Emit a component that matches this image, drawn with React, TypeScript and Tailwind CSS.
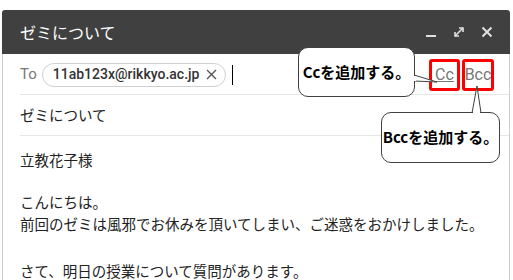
import React from "react";

const jp = { fontFamily: '"Noto Sans CJK JP", "Noto Sans", sans-serif' };
const roboto = { fontFamily: "Roboto, sans-serif" };

function Callout({ children, className }: { children: React.ReactNode; className: string }) {
  return (
    <div
      className={`absolute flex items-center justify-center rounded-[10px] border border-[#404040] bg-white text-[15px] font-bold text-black ${className}`}
      style={jp}
    >
      {children}
    </div>
  );
}

export default function App() {
  return (
    <div className="relative h-[280px] w-[513px] overflow-hidden bg-white" style={jp}>
      <div className="ml-[2px] mt-[10px] w-[508px]">
        {/* header */}
        <div className="flex h-[44px] items-center rounded-t-[3px] bg-[#404040] pl-[18px] pr-[16px]">
          <span className="flex-1 text-[16px] text-white">ゼミについて</span>
          <div className="flex items-center gap-[14px] text-[#e0e0e0]">
            <svg width="14" height="14" viewBox="0 0 14 14">
              <rect x="2" y="10" width="10" height="2" fill="currentColor" />
            </svg>
            <svg width="14" height="14" viewBox="0 0 14 14" fill="none" stroke="currentColor" strokeWidth="1.6">
              <path d="M3 11 L11 3" />
              <path d="M7 3 H11 V7" />
              <path d="M3 7 V11 H7" />
            </svg>
            <svg width="14" height="14" viewBox="0 0 14 14" fill="none" stroke="currentColor" strokeWidth="2">
              <path d="M2.5 2.5 L11.5 11.5 M11.5 2.5 L2.5 11.5" />
            </svg>
          </div>
        </div>

        {/* body */}
        <div className="h-[226px] border-x border-[#cfcfcf] pl-[17px]">
          <div className="flex h-[41px] items-center border-b border-[#e6e6e6] pr-[15px] pt-[1px]">
            <span className="text-[15px] text-[#777]" style={roboto}>
              To
            </span>
            <span
              className="ml-[5px] flex h-[24px] items-center rounded-full border border-[#d0d0d0] pl-[10px] pr-[8px] text-[14px] font-medium text-[#333]"
              style={roboto}
            >
              11ab123x@rikkyo.ac.jp
              <svg className="ml-[7px]" width="11" height="11" viewBox="0 0 11 11" stroke="#555" strokeWidth="1.4">
                <path d="M1 1 L10 10 M10 1 L1 10" />
              </svg>
            </span>
            <span className="ml-[6px] h-[20px] w-[1px] bg-black" />
            <div className="ml-auto flex gap-[2px] text-[16px] text-[#777]" style={roboto}>
              <span className="flex h-[32px] w-[31px] items-center justify-center rounded-[3px] border-[3px] border-[#ff0000] underline">
                Cc
              </span>
              <span className="flex h-[32px] w-[32px] items-center justify-center rounded-[3px] border-[3px] border-[#ff0000]">
                Bcc
              </span>
            </div>
          </div>
          <div className="flex h-[41px] items-center border-b border-[#e6e6e6] text-[14.5px] text-[#222]">
            ゼミについて
          </div>
          <div className="pt-[13px] text-[14.5px] leading-[22px] text-[#222]">
            <p>立教花子様</p>
            <p className="mt-[20px]">こんにちは。</p>
            <p>前回のゼミは風邪でお休みを頂いてしまい、ご迷惑をおかけしました。</p>
            <p className="mt-[25px]">さて、明日の授業について質問があります。</p>
          </div>
        </div>
      </div>

      {/* callout tails */}
      <svg className="absolute left-0 top-0" width="513" height="280" fill="none">
        <path d="M414 75 L437 82 L414 81" fill="white" stroke="#404040" strokeWidth="1" />
        <path d="M472 113 L477 86 L481 113" fill="white" stroke="#404040" strokeWidth="1" />
      </svg>

      <Callout className="left-[298px] top-[47px] h-[50px] w-[117px]">Ccを追加する。</Callout>
      <Callout className="left-[381px] top-[112px] h-[51px] w-[119px]">Bccを追加する。</Callout>

      {/* cover tail joins */}
      <div className="absolute left-[413px] top-[76px] h-[5px] w-[3px] bg-white" />
      <div className="absolute left-[473px] top-[111px] h-[3px] w-[7px] bg-white" />
    </div>
  );
}
